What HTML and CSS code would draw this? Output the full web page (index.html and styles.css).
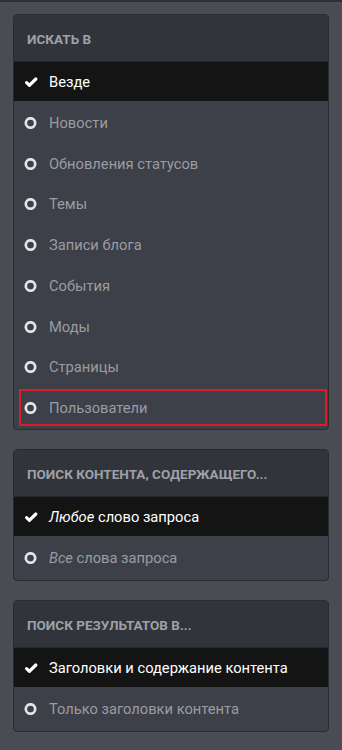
FILE: index.html
```html
<!DOCTYPE html>
<html lang="ru">
<head>
<meta charset="utf-8">
<link rel="stylesheet" href="styles.css">
</head>
<body>
<div class="page">
  <section class="card">
    <div class="card-head">Искать в</div>
    <ul class="opts">
      <li class="opt sel"><svg class="ico" viewBox="0 0 14 12"><path d="M2.6 6.6 L5.4 9.3 L11.8 3" fill="none" stroke="#fff" stroke-width="3.2" stroke-linecap="round" stroke-linejoin="round"/></svg><span>Везде</span></li>
      <li class="opt"><svg class="ico" viewBox="0 0 14 12"><circle cx="6.5" cy="6" r="4.7" fill="none" stroke="#e4e4e4" stroke-width="2.7"/></svg><span>Новости</span></li>
      <li class="opt"><svg class="ico" viewBox="0 0 14 12"><circle cx="6.5" cy="6" r="4.7" fill="none" stroke="#e4e4e4" stroke-width="2.7"/></svg><span>Обновления статусов</span></li>
      <li class="opt"><svg class="ico" viewBox="0 0 14 12"><circle cx="6.5" cy="6" r="4.7" fill="none" stroke="#e4e4e4" stroke-width="2.7"/></svg><span>Темы</span></li>
      <li class="opt"><svg class="ico" viewBox="0 0 14 12"><circle cx="6.5" cy="6" r="4.7" fill="none" stroke="#e4e4e4" stroke-width="2.7"/></svg><span>Записи блога</span></li>
      <li class="opt"><svg class="ico" viewBox="0 0 14 12"><circle cx="6.5" cy="6" r="4.7" fill="none" stroke="#e4e4e4" stroke-width="2.7"/></svg><span>События</span></li>
      <li class="opt"><svg class="ico" viewBox="0 0 14 12"><circle cx="6.5" cy="6" r="4.7" fill="none" stroke="#e4e4e4" stroke-width="2.7"/></svg><span>Моды</span></li>
      <li class="opt"><svg class="ico" viewBox="0 0 14 12"><circle cx="6.5" cy="6" r="4.7" fill="none" stroke="#e4e4e4" stroke-width="2.7"/></svg><span>Страницы</span></li>
      <li class="opt focus"><svg class="ico" viewBox="0 0 14 12"><circle cx="6.5" cy="6" r="4.7" fill="none" stroke="#e4e4e4" stroke-width="2.7"/></svg><span>Пользователи</span></li>
    </ul>
  </section>
  <section class="card">
    <div class="card-head">Поиск контента, содержащего...</div>
    <ul class="opts">
      <li class="opt sel"><svg class="ico" viewBox="0 0 14 12"><path d="M2.6 6.6 L5.4 9.3 L11.8 3" fill="none" stroke="#fff" stroke-width="3.2" stroke-linecap="round" stroke-linejoin="round"/></svg><span><em>Любое</em> слово запроса</span></li>
      <li class="opt"><svg class="ico" viewBox="0 0 14 12"><circle cx="6.5" cy="6" r="4.7" fill="none" stroke="#e4e4e4" stroke-width="2.7"/></svg><span><em>Все</em> слова запроса</span></li>
    </ul>
  </section>
  <section class="card">
    <div class="card-head">Поиск результатов в...</div>
    <ul class="opts">
      <li class="opt sel"><svg class="ico" viewBox="0 0 14 12"><path d="M2.6 6.6 L5.4 9.3 L11.8 3" fill="none" stroke="#fff" stroke-width="3.2" stroke-linecap="round" stroke-linejoin="round"/></svg><span>Заголовки и содержание контента</span></li>
      <li class="opt"><svg class="ico" viewBox="0 0 14 12"><circle cx="6.5" cy="6" r="4.7" fill="none" stroke="#e4e4e4" stroke-width="2.7"/></svg><span>Только заголовки контента</span></li>
    </ul>
  </section>
</div>
</body>
</html>
```
FILE: styles.css
```css
html, body {
  margin: 0;
  padding: 0;
}
body {
  background: #4a4c54;
  font-family: Roboto, "Noto Sans", sans-serif;
  border-top: 2px solid #2e3036;
  min-height: 748px;
}
.page {
  display: flex;
  flex-direction: column;
  gap: 19px;
  padding: 12px 13px 0;
}
.card {
  background: #3d4048;
  border: 1px solid #2a2c31;
  border-radius: 4px;
  overflow: hidden;
}
.card-head {
  background: #31343b;
  height: 47px;
  box-sizing: border-box;
  border-bottom: 1px solid #26282d;
  padding: 16px 0 0 13px;
  font-size: 13.5px;
  font-weight: 700;
  line-height: 16px;
  color: #9fa1a7;
  text-transform: uppercase;
}
.opts {
  list-style: none;
  margin: 0;
  padding: 0 0 3px;
}
.opt {
  display: flex;
  align-items: center;
  gap: 11px;
  height: 40.75px;
  padding: 3px 0 0 10px;
  box-sizing: border-box;
  font-size: 14.7px;
  color: #9a9ca2;
}
.opt.sel {
  background: #141414;
  color: #ffffff;
  height: 39px;
  padding-top: 0;
}
.opt em {
  font-style: italic;
}
.ico {
  width: 14px;
  height: 12px;
  flex: none;
}
.opt.focus {
  margin: 3px 1px 0 5px;
  height: 37px;
  padding: 0 0 0 3px;
  border: 2px solid #d61f2a;
}
```
